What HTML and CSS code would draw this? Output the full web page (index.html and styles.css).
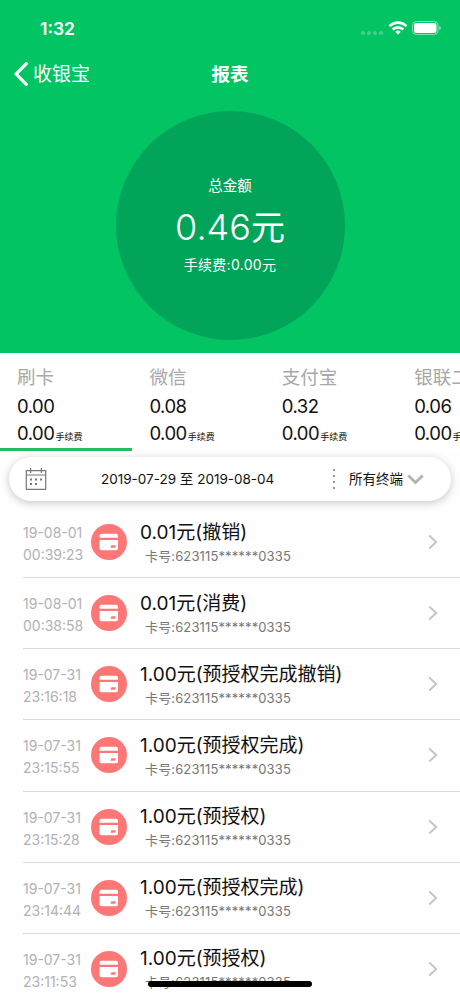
FILE: index.html
```html
<!DOCTYPE html>
<html lang="zh-CN">
<head>
    <meta charset="UTF-8">
    <meta name="viewport" content="width=device-width, initial-scale=1.0">
    <title>报表</title>
    <link rel="stylesheet" href="styles.css">
</head>
<body>
    <svg class="symbols" width="0" height="0">
        <symbol id="icon-card" viewBox="0 0 36 36">
            <circle cx="18" cy="18" r="18" fill="#ff7676"/>
            <path d="M10.500 9.800h14.500q2 0 2 2v1.900h-18.500v-1.900q0-2 2-2z" fill="#fff"/>
            <path d="M8.500 16h18.500v8.300q0 2-2 2h-14.500q-2 0-2-2z" fill="#fff"/>
            <path d="M20.300 21.300h4.600l-.8 2.500h-4.600z" fill="#ff7676"/>
        </symbol>
        <symbol id="icon-next" viewBox="0 0 10 16">
            <path d="M1.200 1.500l7 6.500-7 6.500" fill="none" stroke="#c4c4c6" stroke-width="1.900"/>
        </symbol>
    </svg>

    <div class="app">
        <header class="header">
            <div class="status-bar">
                <span class="time">1:32</span>
                <div class="status-icons">
                    <span class="signal"><i></i><i></i><i></i><i></i></span>
                    <svg class="wifi" width="20" height="14" viewBox="0 0 20 14" fill="none" stroke="#fff" stroke-width="2.700">
                        <path d="M1.500 5.100a12.200 12.200 0 0 1 17 0"/>
                        <path d="M4.700 8.500a7.600 7.600 0 0 1 10.600 0"/>
                        <path d="M10 13.700l-2.700-2.900a4 4 0 0 1 5.400 0z" fill="#fff" stroke="none"/>
                    </svg>
                    <svg class="battery" width="29" height="14" viewBox="0 0 29 14">
                        <rect x=".5" y=".5" width="25.500" height="13" rx="3.800" fill="none" stroke="#fff" stroke-opacity=".5"/>
                        <rect x="2" y="2" width="22.500" height="10" rx="2.300" fill="#fff"/>
                        <path d="M27.300 4.800q1.500.6 1.500 2.200t-1.500 2.200z" fill="#fff" fill-opacity=".6"/>
                    </svg>
                </div>
            </div>
            <nav class="nav-bar">
                <a class="back">
                    <svg width="14" height="24" viewBox="0 0 14 24">
                        <path d="M12.300 1.600L2.200 12l10.100 10.400" fill="none" stroke="#fff" stroke-width="3.200" stroke-linecap="round"/>
                    </svg>
                    <span>收银宝</span>
                </a>
                <h1>报表</h1>
            </nav>
            <div class="total">
                <p class="total-label">总金额</p>
                <p class="total-amount">0.46<span>元</span></p>
                <p class="total-fee">手续费:0.00元</p>
            </div>
        </header>

        <div class="tabs">
            <div class="tab active">
                <h2>刷卡</h2>
                <p>0.00</p>
                <p>0.00<small>手续费</small></p>
            </div>
            <div class="tab">
                <h2>微信</h2>
                <p>0.08</p>
                <p>0.00<small>手续费</small></p>
            </div>
            <div class="tab">
                <h2>支付宝</h2>
                <p>0.32</p>
                <p>0.00<small>手续费</small></p>
            </div>
            <div class="tab">
                <h2>银联二维码</h2>
                <p>0.06</p>
                <p>0.00<small>手续费</small></p>
            </div>
        </div>

        <div class="filter">
            <svg class="calendar" width="22" height="24" viewBox="0 0 22 24" fill="none" stroke="#777" stroke-width="1.200">
                <path d="M1.300 3.600h19.400v18.800H1.300zM1.300 8h19.400M5.600 1v5M16.400 1v5"/>
                <path d="M5 12.500h2M10 12.500h2M15 12.500h2M5 17h2M10 17h2" stroke-width="2"/>
            </svg>
            <span class="range">2019-07-29 至 2019-08-04</span>
            <span class="dots"><i></i><i></i><i></i><i></i></span>
            <span class="terminal">所有终端</span>
            <svg class="arrow" width="17" height="11" viewBox="0 0 17 11">
                <path d="M1.300 1.500l7.200 7 7.200-7" fill="none" stroke="#b4b4b4" stroke-width="3"/>
            </svg>
        </div>

        <ul class="list">
            <li class="row">
                <div class="when">19-08-01<br>00:39:23</div>
                <svg class="card"><use href="#icon-card"/></svg>
                <div class="info">
                    <h3>0.01元(撤销)</h3>
                    <p>卡号:623115******0335</p>
                </div>
                <svg class="next"><use href="#icon-next"/></svg>
            </li>
            <li class="row">
                <div class="when">19-08-01<br>00:38:58</div>
                <svg class="card"><use href="#icon-card"/></svg>
                <div class="info">
                    <h3>0.01元(消费)</h3>
                    <p>卡号:623115******0335</p>
                </div>
                <svg class="next"><use href="#icon-next"/></svg>
            </li>
            <li class="row">
                <div class="when">19-07-31<br>23:16:18</div>
                <svg class="card"><use href="#icon-card"/></svg>
                <div class="info">
                    <h3>1.00元(预授权完成撤销)</h3>
                    <p>卡号:623115******0335</p>
                </div>
                <svg class="next"><use href="#icon-next"/></svg>
            </li>
            <li class="row">
                <div class="when">19-07-31<br>23:15:55</div>
                <svg class="card"><use href="#icon-card"/></svg>
                <div class="info">
                    <h3>1.00元(预授权完成)</h3>
                    <p>卡号:623115******0335</p>
                </div>
                <svg class="next"><use href="#icon-next"/></svg>
            </li>
            <li class="row">
                <div class="when">19-07-31<br>23:15:28</div>
                <svg class="card"><use href="#icon-card"/></svg>
                <div class="info">
                    <h3>1.00元(预授权)</h3>
                    <p>卡号:623115******0335</p>
                </div>
                <svg class="next"><use href="#icon-next"/></svg>
            </li>
            <li class="row">
                <div class="when">19-07-31<br>23:14:44</div>
                <svg class="card"><use href="#icon-card"/></svg>
                <div class="info">
                    <h3>1.00元(预授权完成)</h3>
                    <p>卡号:623115******0335</p>
                </div>
                <svg class="next"><use href="#icon-next"/></svg>
            </li>
            <li class="row">
                <div class="when">19-07-31<br>23:11:53</div>
                <svg class="card"><use href="#icon-card"/></svg>
                <div class="info">
                    <h3>1.00元(预授权)</h3>
                    <p>卡号:623115******0335</p>
                </div>
                <svg class="next"><use href="#icon-next"/></svg>
            </li>
        </ul>

        <div class="home-indicator"></div>
    </div>
</body>
</html>
```
FILE: styles.css
```css
* {
    margin: 0;
    padding: 0;
    box-sizing: border-box;
}

body {
    font-family: Inter, 'Noto Sans CJK SC', sans-serif;
    background: #fff;
    color: #111;
}

h1, h2, h3 {
    font-weight: 400;
}

.symbols {
    position: absolute;
}

.app {
    position: relative;
    width: 460px;
    height: 996px;
    overflow: hidden;
    background: #fefefe;
}

/* Header */
.header {
    height: 353px;
    background: #02c463;
    color: #fff;
}

.status-bar {
    display: flex;
    justify-content: space-between;
    align-items: center;
    height: 52px;
    padding: 4px 19px 0 40px;
}

.time {
    font-size: 17.5px;
    font-weight: 600;
}

.status-icons {
    display: flex;
    align-items: center;
}

.signal {
    display: flex;
    gap: 2px;
    margin: 9px 5px 0 0;
}

.signal i {
    width: 4px;
    height: 4px;
    border-radius: 50%;
    background: rgba(255, 255, 255, 0.25);
}

.wifi {
    margin-right: 4px;
}

.nav-bar {
    display: grid;
    grid-template-columns: 1fr auto 1fr;
    align-items: center;
    height: 44px;
    padding: 0 14px;
}

.back {
    display: flex;
    align-items: center;
    gap: 5px;
    font-size: 19px;
    line-height: 28px;
}

.back span {
    padding-top: 2px;
}

.nav-bar h1 {
    font-size: 18.5px;
    line-height: 28px;
    font-weight: 700;
}

.total {
    width: 229px;
    height: 229px;
    margin: 15px auto 0;
    padding-top: 65px;
    border-radius: 50%;
    background: #02a459;
    text-align: center;
}

.total-label {
    font-size: 14.5px;
    line-height: 20px;
}

.total-amount {
    margin: 9px 0 10px;
    font-size: 36px;
    line-height: 44px;
    font-weight: 300;
}

.total-amount span {
    font-weight: 400;
    font-size: 34px;
}

.total-fee {
    font-size: 14px;
    line-height: 10px;
    letter-spacing: 0.3px;
}

/* Channel tabs */
.tabs {
    display: flex;
    height: 98px;
    overflow: hidden;
    background: #fff;
}

.tab {
    flex: 0 0 132.4px;
    padding: 10px 0 0 17px;
    white-space: nowrap;
}

.tab.active {
    border-bottom: 3px solid #1fbf5f;
}

.tab h2 {
    font-size: 18.5px;
    line-height: 28px;
    color: #a8a8a8;
}

.tab p {
    font-size: 18.5px;
    line-height: 26px;
    margin-top: 2px;
    letter-spacing: -0.5px;
}

.tab p + p {
    margin-top: 1px;
}

.tab small {
    margin-left: 1px;
    font-size: 9px;
    letter-spacing: 0;
}

/* Date and terminal filter */
.filter {
    display: flex;
    align-items: center;
    width: 442px;
    height: 44px;
    margin: 6px 0 0 9px;
    padding: 0 27px 0 16px;
    border-radius: 22px;
    background: #fff;
    box-shadow: 0 2px 8px rgba(0, 0, 0, 0.22);
    font-size: 13.5px;
    line-height: 20px;
    white-space: nowrap;
}

.range {
    margin-left: 54px;
}

.dots {
    display: flex;
    flex-direction: column;
    gap: 4px;
    margin-left: auto;
    margin-right: 14px;
}

.dots i {
    width: 2px;
    height: 2px;
    background: #999;
}

.arrow {
    margin-left: 4px;
}

/* Transactions */
.list {
    list-style: none;
    margin-top: 6px;
    padding-left: 23px;
}

.row {
    display: flex;
    align-items: center;
    height: 71.15px;
    padding-right: 22px;
    border-bottom: 1px solid #dcdcdc;
}

.when {
    flex: 0 0 68px;
    font-size: 14px;
    line-height: 22px;
    padding-top: 4px;
    color: #b2b2b2;
    white-space: nowrap;
}

.card {
    width: 36px;
    height: 36px;
}

.info {
    flex: 1;
    margin-left: 13px;
    white-space: nowrap;
}

.info h3 {
    font-size: 19px;
    line-height: 27px;
}

.info p {
    padding-left: 5px;
    font-size: 13px;
    line-height: 20px;
    letter-spacing: 0.13px;
    color: #777;
}

.next {
    width: 10px;
    height: 16px;
}

.home-indicator {
    position: absolute;
    left: 148px;
    top: 981px;
    width: 164px;
    height: 6px;
    border-radius: 3px;
    background: #000;
}
```
